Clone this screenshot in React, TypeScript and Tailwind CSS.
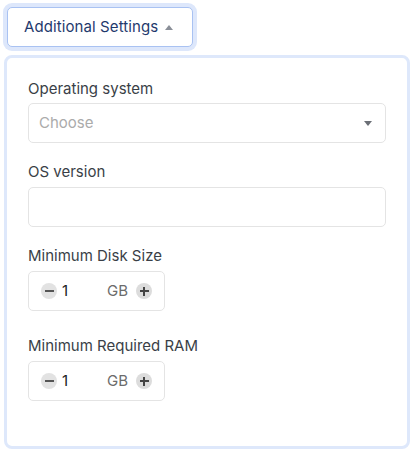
import React from 'react';

const font = { fontFamily: 'Inter, "Noto Sans", sans-serif' };

function Caret({ up }: { up?: boolean }) {
  return (
    <svg width="8" height="5" viewBox="0 0 8 5" className="shrink-0">
      {up ? <path d="M0 5 L4 0 L8 5 Z" fill="#8a8f98" /> : <path d="M0 0 L4 5 L8 0 Z" fill="#6b6f76" />}
    </svg>
  );
}

function Stepper() {
  return (
    <div className="flex items-center w-[137px] h-[40px] border border-[#e4e4e4] rounded-[5px] pl-[12px] pr-[12px] bg-white">
      <span className="w-[16px] h-[16px] rounded-full bg-[#e2e2e2] flex items-center justify-center shrink-0">
        <span className="block w-[9px] h-[2px] bg-[#555]" />
      </span>
      <span className="ml-[5px] w-[45px] text-[15px] text-[#222]">1</span>
      <span className="text-[15px] text-[#6b6b6b]">GB</span>
      <span className="ml-[8px] w-[16px] h-[16px] rounded-full bg-[#dcdcdc] flex items-center justify-center shrink-0 relative">
        <span className="block w-[9px] h-[2px] bg-[#444]" />
        <span className="absolute w-[2px] h-[9px] bg-[#444]" />
      </span>
    </div>
  );
}

export default function App() {
  return (
    <div className="bg-white w-[419px] h-[456px]" style={font}>
      <div className="pt-[7px] pl-[7px]">
        <button className="flex items-center gap-[7px] h-[40px] pl-[16px] pr-[19px] border border-[#a9c2f2] rounded-[5px] bg-white shadow-[0_0_0_4px_#dde7fb] text-[15px] tracking-[0.1px] text-[#1f3a6d]">
          <span>Additional Settings</span>
          <Caret up />
        </button>
      </div>
      <div className="mt-[8px] ml-[4px] w-[406px] h-[394px] border-[3px] border-[#dee8fb] rounded-[8px] px-[21px] pt-[21px]">
        <div className="text-[15px] leading-[20px] text-[#3a3f47]">Operating system</div>
        <div className="mt-[4px] h-[40px] border border-[#e4e4e4] rounded-[5px] flex items-center justify-between pl-[10px] pr-[13px]">
          <span className="text-[15px] text-[#ababab]">Choose</span>
          <Caret />
        </div>
        <div className="mt-[19px] text-[15px] leading-[20px] text-[#3a3f47]">OS version</div>
        <div className="mt-[5px] h-[40px] border border-[#e4e4e4] rounded-[5px]" />
        <div className="mt-[19px] text-[15px] leading-[20px] text-[#3a3f47]">Minimum Disk Size</div>
        <div className="mt-[5px]">
          <Stepper />
        </div>
        <div className="mt-[25px] text-[15px] leading-[20px] text-[#3a3f47]">Minimum Required RAM</div>
        <div className="mt-[5px]">
          <Stepper />
        </div>
      </div>
    </div>
  );
}
